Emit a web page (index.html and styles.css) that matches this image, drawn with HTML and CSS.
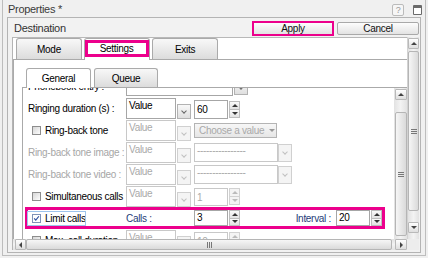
FILE: index.html
```html
<!DOCTYPE html>
<html lang="en">
<head>
	<meta charset="utf-8">
	<title>Properties</title>
	<link rel="stylesheet" href="styles.css">
</head>
<body>
<div class="window">
	<div class="titlebar">
		<span class="title">Properties *</span>
		<span class="help">?</span>
		<span class="maximize"></span>
	</div>

	<section class="dest">
		<div class="dest-head">
			<span>Destination</span>
			<div class="actions">
				<button class="btn apply">Apply</button>
				<button class="btn cancel">Cancel</button>
			</div>
		</div>

		<div class="dest-body">
			<div class="dest-view">
				<div class="tabs">
					<div class="tab">Mode</div>
					<div class="tab active"><span class="mark">Settings</span></div>
					<div class="tab">Exits</div>
				</div>
				<div class="tabpanel">
					<div class="subtabs">
						<div class="subtab active">General</div>
						<div class="subtab">Queue</div>
					</div>
					<div class="inner">
						<div class="inner-view">
							<div class="rows">
								<!-- scrolled partly out of view -->
								<div class="row">
									<span class="lbl">Phonebook entry :</span>
									<span class="combo wide"><span class="field"></span><span class="cbtn"></span></span>
								</div>
								<div class="row">
									<span class="lbl">Ringing duration (s) :</span>
									<span class="combo"><span class="field">Value</span><span class="cbtn"></span></span>
									<span class="spin"><span class="field">60</span><span class="spin-btns"><span class="sp up"></span><span class="sp down"></span></span></span>
								</div>
								<div class="row">
									<span class="lbl"><span class="chk"></span>Ring-back tone</span>
									<span class="combo off"><span class="field">Value</span><span class="cbtn"></span></span>
									<span class="choose">Choose a value <i class="tri"></i></span>
								</div>
								<div class="row">
									<span class="lbl off">Ring-back tone image :</span>
									<span class="combo off"><span class="field">Value</span><span class="cbtn"></span></span>
									<span class="combo long off"><span class="field">----------------</span><span class="cbtn"></span></span>
								</div>
								<div class="row">
									<span class="lbl off">Ring-back tone video :</span>
									<span class="combo off"><span class="field">Value</span><span class="cbtn"></span></span>
									<span class="combo long off"><span class="field">----------------</span><span class="cbtn"></span></span>
								</div>
								<div class="row">
									<span class="lbl"><span class="chk"></span>Simultaneous calls</span>
									<span class="combo off"><span class="field">Value</span><span class="cbtn"></span></span>
									<span class="spin off"><span class="field">1</span><span class="spin-btns"><span class="sp up"></span><span class="sp down"></span></span></span>
								</div>
								<div class="row limit">
									<span class="lbl"><span class="focus"><span class="chk on"><svg viewBox="0 0 9 9"><path d="M1.5 4.2 L3.6 6.6 L7.6 1.6"/></svg></span>Limit calls</span></span>
									<span class="calls">Calls :</span>
									<span class="spin"><span class="field">3</span><span class="spin-btns"><span class="sp up"></span><span class="sp down"></span></span></span>
									<span class="interval">Interval :</span>
									<span class="spin"><span class="field">20</span><span class="spin-btns"><span class="sp up"></span><span class="sp down"></span></span></span>
								</div>
								<div class="row">
									<span class="lbl"><span class="chk"></span>Max. call duration</span>
									<span class="combo off"><span class="field">Value</span><span class="cbtn"></span></span>
									<span class="spin off"><span class="field">10</span><span class="spin-btns"><span class="sp up"></span><span class="sp down"></span></span></span>
								</div>
							</div>
						</div>
						<div class="vscroll inner-v">
							<div class="sb-btn"><i class="arr up"></i></div>
							<div class="thumb"><i class="grip"></i></div>
						</div>
					</div>
				</div>
			</div>

			<div class="vscroll outer-v">
				<div class="sb-btn"><i class="arr up"></i></div>
				<div class="thumb"><i class="grip"></i></div>
				<div class="sb-btn"><i class="arr down"></i></div>
			</div>
			<div class="hscroll">
				<div class="sb-btn"><i class="arr left"></i></div>
				<div class="thumb"><i class="grip"></i></div>
				<div class="sb-btn"><i class="arr right"></i></div>
			</div>
			<div class="corner"></div>
		</div>
	</section>
</div>
</body>
</html>
```

FILE: styles.css
```css
html, body{ margin:0; width:428px; height:258px; overflow:hidden; background:#f0f0f0; }
body{ font-family:"Liberation Sans", Arial, sans-serif; font-size:10px; letter-spacing:-0.3px; color:#000; }

.window{
	box-sizing:border-box; width:424px; height:256px; margin-left:2px;
	border:1px solid #bdbdbd; border-top:0; background:#f0f0f0;
}
.titlebar{ height:17px; display:flex; align-items:center; padding:0 3px 0 5px; }
.title{ font-size:11px; color:#3b3b3b; margin-right:auto; }
.help{
	box-sizing:border-box; width:12px; height:12px; margin:3px 9px 0 0;
	border:1px solid #bbb; border-radius:2px; background:#f6f6f6;
	font-size:9px; line-height:10px; text-align:center; color:#9a9a9a;
}
.maximize{
	box-sizing:border-box; width:9px; height:10px; margin-top:3px;
	border:1px solid #6a6a6a; border-top-width:3px; border-radius:1px; background:#fff;
}

.dest{
	box-sizing:border-box; width:414px; height:236px; margin-left:4px;
	border:1px solid #b4b4b4; background:#f2f2f2;
}
.dest-head{ height:19px; display:flex; align-items:center; padding-left:6px; font-size:11px; color:#333; }
.actions{ margin-left:auto; margin-right:1px; align-self:flex-start; margin-top:3px; display:flex; gap:3px; }
.btn{
	box-sizing:border-box; width:82px; height:13px; margin:0; padding:0;
	font:inherit; font-size:10px; letter-spacing:-0.3px; line-height:11px; color:#111;
	border:1px solid #a9a9a9; border-radius:2px; background:linear-gradient(#fdfdfd,#e3e3e3);
}
.apply{ height:15px; border:2px solid #ec008c; border-radius:0; }
.cancel{ margin-top:1px; }

.dest-body{ display:grid; grid-template-columns:395px 12px; grid-template-rows:202px 11px; margin-left:4px; }
.dest-view{ box-sizing:border-box; border-top:1px solid #b8b8b8; border-left:1px solid #b4b4b4; background:#fff; overflow:hidden; }

/* tabs */
.tabs{ display:flex; gap:2px; padding-left:3px; height:21px; align-items:flex-end; }
.tab{
	box-sizing:border-box; width:66px; height:21px; padding-top:1px;
	border:1px solid #aaa; border-bottom:0; border-radius:3px 3px 0 0;
	background:linear-gradient(#f8f8f8,#dcdcdc);
	display:flex; align-items:center; justify-content:center;
}
.tab.active{ background:#fff; height:22px; margin-bottom:-1px; position:relative; z-index:1; align-items:flex-start; padding-top:1px; }
.mark{
	box-sizing:border-box; width:64px; height:17px; margin-left:-1px;
	border:3px solid #ec008c; display:flex; align-items:center; justify-content:center;
}
.tabpanel{ border-top:1px solid #aaa; border-left:1px solid #aaa; padding:8px 0 0 8px; background:#fff; }
.subtabs{ display:flex; gap:3px; padding-left:4px; height:19px; align-items:flex-end; }
.subtab{
	box-sizing:border-box; width:64px; height:19px;
	border:1px solid #aaa; border-bottom:0; border-radius:3px 3px 0 0;
	background:linear-gradient(#f8f8f8,#dcdcdc);
	display:flex; align-items:center; justify-content:center;
}
.subtab:first-child{ width:65px; }
.subtab.active{ background:#fff; height:20px; margin-bottom:-1px; position:relative; z-index:1; }

.inner{ display:flex; height:170px; border-top:1px solid #aaa; border-left:1px solid #aaa; }
.inner-view{ box-sizing:border-box; width:371px; flex:none; overflow:hidden; padding-left:5px; }
.rows{ margin-top:-13px; }

/* form rows */
.row{ display:flex; align-items:flex-end; height:22px; box-sizing:border-box; }
.lbl{ width:98px; flex:none; align-self:center; display:flex; align-items:center; white-space:nowrap; }
.lbl.off{ color:#a6a6a6; }
.chk{
	box-sizing:border-box; width:9px; height:9px; margin:0 4px; flex:none;
	border:1px solid #8d8d8d; background:linear-gradient(135deg,#d6d6d6,#fdfdfd);
}
.chk.on{ border-color:#7f93b8; background:#fff; }
.chk svg{ display:block; width:7px; height:7px; }
.chk path{ stroke:#2c4f9e; stroke-width:1.5; fill:none; }
.focus{ display:flex; align-items:center; width:57px; height:13px; outline:1px solid #9ec4ec; }

.field{
	box-sizing:border-box; height:21px; padding:1px 2px; line-height:12px;
	border:1px solid #a6a6a6; background:#fff; white-space:nowrap; overflow:hidden;
}
.combo{ display:flex; align-items:flex-end; gap:1px; margin-right:3px; }
.combo .field{ width:50px; }
.combo.wide .field{ width:107px; margin-bottom:1px; }
.combo.long{ gap:0; }
.combo.long .field{ width:84px; height:19px; margin-bottom:1px; }
.cbtn{
	box-sizing:border-box; width:14px; height:15px; flex:none;
	border:1px solid #b2b2b2; background:linear-gradient(#f8f8f8,#dfdfdf);
	display:flex; align-items:center; justify-content:center;
}
.combo.long .cbtn{ height:18px; margin-bottom:1px; }
.combo.wide .cbtn{ margin-bottom:2px; }
.cbtn::after{
	content:""; width:3px; height:3px; margin-top:-2px;
	border-right:1px solid #666; border-bottom:1px solid #666; transform:rotate(45deg);
}
.off .field{ border-color:#c8c8c8; color:#a9a9a9; }
.off .cbtn{ border-color:#d0d0d0; background:#f4f4f4; }
.off .cbtn::after{ border-color:#c0c0c0; }

.spin{ display:flex; align-items:flex-end; gap:1px; }
.spin .field{ width:34px; height:19px; line-height:15px; }
.spin-btns{ width:11px; height:17px; margin-bottom:1px; display:flex; flex-direction:column; }
.sp{
	flex:1; box-sizing:border-box; border:1px solid #bdbdbd;
	background:linear-gradient(#fafafa,#e2e2e2);
	display:flex; align-items:center; justify-content:center;
}
.sp + .sp{ border-top:0; }
.sp::after{ content:""; border-left:3px solid transparent; border-right:3px solid transparent; }
.sp.up::after{ border-bottom:3px solid #333; }
.sp.down::after{ border-top:3px solid #333; }
.off.spin .spin-btns{ margin-bottom:2px; }
.off.spin .field{ height:18px; margin-bottom:1px; }
.off .sp{ border-color:#d2d2d2; background:#f4f4f4; }
.off .sp.up::after{ border-bottom-color:#bbb; }
.off .sp.down::after{ border-top-color:#bbb; }

.choose{
	box-sizing:border-box; width:83px; height:15px; margin-bottom:3px; padding-left:4px;
	border:1px solid #b4b4b4; background:linear-gradient(#f7f7f7,#e6e6e6); color:#a9a9a9;
	display:flex; align-items:center; gap:5px; white-space:nowrap;
}
.tri{ border-left:3px solid transparent; border-right:3px solid transparent; border-top:3px solid #999; }

.row.limit{ width:360px; margin-left:-3px; border:3px solid #ec008c; align-items:center; }
.limit .spin .field{ height:16px; line-height:12px; }
.limit .spin-btns{ height:16px; margin-bottom:0; }
.calls{ width:68px; flex:none; color:#243c78; }
.interval{ margin-left:auto; margin-right:5px; color:#243c78; }

/* scrollbars */
.vscroll{ box-sizing:border-box; display:flex; flex-direction:column; align-items:center; background:linear-gradient(90deg,#e2e2e2,#f3f3f3,#e2e2e2); }
.outer-v{ border-left:1px solid #d2d2d2; padding-top:1px; }
.inner-v{ width:13px; flex:none; padding-top:1px; }
.sb-btn{
	box-sizing:border-box; width:11px; height:11px; flex:none;
	border:1px solid #b9b9b9; border-radius:1px; background:linear-gradient(#fefefe,#dedede);
	display:flex; align-items:center; justify-content:center;
}
.inner-v .sb-btn{ width:12px; }
.thumb{
	box-sizing:border-box; border:1px solid #b5b5b5; border-radius:2px;
	background:linear-gradient(90deg,#f6f6f6,#dadada);
	display:flex; align-items:center; justify-content:center; flex:none;
}
.outer-v .thumb{ width:11px; height:160px; margin:2px 0 11px; }
.inner-v .thumb{ width:12px; height:124px; margin-top:12px; }
.grip{ width:6px; height:5px; background:repeating-linear-gradient(#777 0 1px, transparent 1px 2px); }

.arr{ width:0; height:0; }
.arr.up{ border-left:3px solid transparent; border-right:3px solid transparent; border-bottom:3px solid #444; }
.arr.down{ border-left:3px solid transparent; border-right:3px solid transparent; border-top:3px solid #444; }
.arr.left{ border-top:3px solid transparent; border-bottom:3px solid transparent; border-right:3px solid #444; }
.arr.right{ border-top:3px solid transparent; border-bottom:3px solid transparent; border-left:3px solid #444; }

.hscroll{
	box-sizing:border-box; display:flex; align-items:center; gap:0; padding-left:2px;
	background:linear-gradient(#e2e2e2,#f3f3f3,#e2e2e2); border-left:1px solid #b4b4b4;
}
.hscroll .sb-btn{ height:11px; }
.hscroll .thumb{ width:366px; height:11px; margin-right:3px; background:linear-gradient(#f6f6f6,#dadada); }
.hscroll .sb-btn:last-child{ width:12px; }
.hscroll .grip{ width:5px; height:6px; background:repeating-linear-gradient(90deg,#777 0 1px, transparent 1px 2px); }
.corner{ background:#ededed; }
```
